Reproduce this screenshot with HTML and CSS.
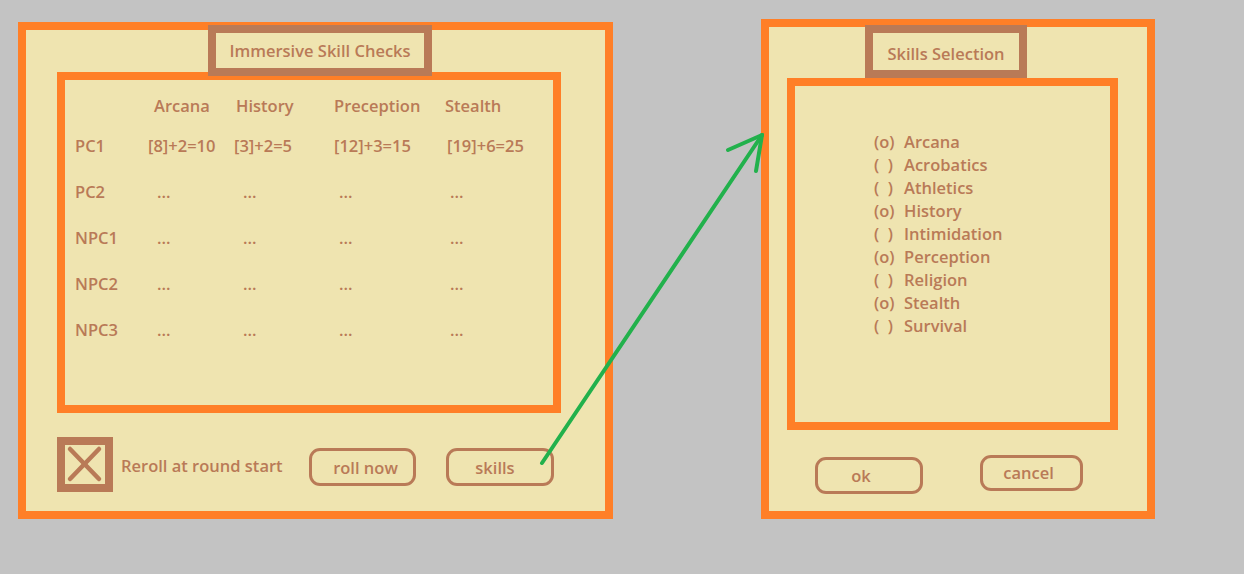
FILE: index.html
```html
<!DOCTYPE html>
<html lang="en">
<head>
<meta charset="utf-8">
<title>Immersive Skill Checks</title>
<link rel="stylesheet" href="styles.css">
</head>
<body>
<div class="stage">
  <section class="panel panel-main">
    <div class="title title-main">Immersive Skill Checks</div>
    <div class="box box-table">
      <div class="grid">
        <div class="cell"></div>
        <div class="cell h1">Arcana</div>
        <div class="cell h2">History</div>
        <div class="cell h3">Preception</div>
        <div class="cell h4">Stealth</div>

        <div class="cell lbl">PC1</div>
        <div class="cell v1">[8]+2=10</div>
        <div class="cell v2">[3]+2=5</div>
        <div class="cell v3">[12]+3=15</div>
        <div class="cell v4">[19]+6=25</div>

        <div class="cell lbl">PC2</div>
        <div class="cell d1">...</div>
        <div class="cell d2">...</div>
        <div class="cell d3">...</div>
        <div class="cell d4">...</div>

        <div class="cell lbl">NPC1</div>
        <div class="cell d1">...</div>
        <div class="cell d2">...</div>
        <div class="cell d3">...</div>
        <div class="cell d4">...</div>

        <div class="cell lbl">NPC2</div>
        <div class="cell d1">...</div>
        <div class="cell d2">...</div>
        <div class="cell d3">...</div>
        <div class="cell d4">...</div>

        <div class="cell lbl">NPC3</div>
        <div class="cell d1">...</div>
        <div class="cell d2">...</div>
        <div class="cell d3">...</div>
        <div class="cell d4">...</div>
      </div>
    </div>
    <div class="controls">
      <div class="check">
        <svg class="check-x" width="40" height="39" viewBox="0 0 40 39" aria-hidden="true">
          <line x1="5" y1="4" x2="34" y2="34" />
          <line x1="34" y1="4" x2="5" y2="34" />
        </svg>
      </div>
      <span class="check-label">Reroll at round start</span>
      <button class="btn btn-roll">roll now</button>
      <button class="btn btn-skills">skills</button>
    </div>
  </section>

  <section class="panel panel-skills">
    <div class="title title-skills">Skills Selection</div>
    <div class="box box-list">
      <ul class="skill-list">
        <li><span class="mark">(o)</span><span>Arcana</span></li>
        <li><span class="mark">(&nbsp;&nbsp;)</span><span>Acrobatics</span></li>
        <li><span class="mark">(&nbsp;&nbsp;)</span><span>Athletics</span></li>
        <li><span class="mark">(o)</span><span>History</span></li>
        <li><span class="mark">(&nbsp;&nbsp;)</span><span>Intimidation</span></li>
        <li><span class="mark">(o)</span><span>Perception</span></li>
        <li><span class="mark">(&nbsp;&nbsp;)</span><span>Religion</span></li>
        <li><span class="mark">(o)</span><span>Stealth</span></li>
        <li><span class="mark">(&nbsp;&nbsp;)</span><span>Survival</span></li>
      </ul>
    </div>
    <div class="dialog-buttons">
      <button class="btn btn-ok">ok</button>
      <button class="btn btn-cancel">cancel</button>
    </div>
  </section>
</div>

<svg class="arrow" width="1244" height="574" viewBox="0 0 1244 574" aria-hidden="true">
  <line x1="542" y1="463" x2="762" y2="135" />
  <line x1="762" y1="135" x2="728" y2="150" />
  <line x1="762" y1="135" x2="756" y2="171" />
</svg>
</body>
</html>
```

FILE: styles.css
```css
* {
  box-sizing: border-box;
}

html, body {
  margin: 0;
  padding: 0;
}

body {
  width: 1244px;
  height: 574px;
  background: #c3c3c3;
  font-family: "Open Sans", "DejaVu Sans", sans-serif;
  font-weight: 600;
  font-size: 16.5px;
  color: #b97a57;
  position: relative;
  overflow: hidden;
}

.stage {
  display: flex;
  align-items: flex-start;
  padding-left: 18px;
  gap: 148px;
}

.panel {
  background: #efe4b0;
  border: 8px solid #ff7f27;
  display: flex;
  flex-direction: column;
  align-items: flex-start;
}

.panel-main {
  width: 595px;
  height: 497px;
  margin-top: 22px;
}

.panel-skills {
  width: 394px;
  height: 500px;
  margin-top: 19px;
}

.title {
  border: 8px solid #b97a57;
  background: #efe4b0;
  display: flex;
  align-items: center;
  justify-content: center;
  position: relative;
  z-index: 1;
  white-space: nowrap;
}

.title-main {
  width: 224px;
  height: 51px;
  margin-top: -5px;
  margin-left: 182px;
}

.title-skills {
  width: 162px;
  height: 53px;
  margin-top: -2px;
  margin-left: 96px;
  padding-top: 4px;
}

.box {
  border: 8px solid #ff7f27;
  background: #efe4b0;
}

.box-table {
  width: 504px;
  height: 341px;
  margin-top: -4px;
  margin-left: 31px;
  padding: 8px 0 0 10px;
}

.grid {
  display: grid;
  grid-template-columns: 73px 86px 100px 112px 1fr;
  grid-template-rows: 34px repeat(5, 46px);
  align-items: center;
  white-space: nowrap;
}

.h1 { padding-left: 6px; }
.h2 { padding-left: 2px; }
.h3 { padding-left: 0; }
.h4 { padding-left: 0; margin-left: -1px; }
.v4 { padding-left: 1px; }
.lbl { padding-left: 0; }
.d1 { padding-left: 9px; }
.d2 { padding-left: 9px; }
.d3 { padding-left: 5px; }
.d4 { padding-left: 4px; }

.controls {
  display: flex;
  align-items: center;
  margin-top: 24px;
  margin-left: 31px;
}

.check {
  width: 56px;
  height: 55px;
  border: 8px solid #b97a57;
  background: #efe4b0;
  display: flex;
}

.check-x line {
  stroke: #b97a57;
  stroke-width: 4.5;
  stroke-linecap: round;
}

.check-label {
  width: 196px;
  padding-left: 8px;
  padding-top: 2px;
}

.btn {
  font: inherit;
  color: inherit;
  background: transparent;
  border: 3px solid #b97a57;
  border-radius: 11px;
  padding: 0;
  display: flex;
  align-items: center;
  justify-content: center;
}

.btn-roll {
  width: 107px;
  height: 38px;
  margin-top: 5px;
  padding-left: 6px;
}

.btn-skills {
  width: 108px;
  height: 38px;
  margin-top: 5px;
  margin-left: 30px;
  padding-right: 10px;
}

.box-list {
  width: 331px;
  height: 352px;
  margin-left: 18px;
  padding: 44px 0 0 79px;
}

.skill-list {
  list-style: none;
  margin: 0;
  padding: 0;
}

.skill-list li {
  display: flex;
  height: 23px;
  line-height: 23px;
  white-space: nowrap;
}

.mark {
  width: 30px;
  white-space: pre;
}

.dialog-buttons {
  display: flex;
  align-items: flex-start;
  margin-left: 46px;
}

.btn-ok {
  width: 108px;
  height: 37px;
  margin-top: 27px;
  padding-right: 16px;
}

.btn-cancel {
  width: 103px;
  height: 36px;
  margin-top: 25px;
  margin-left: 57px;
  padding-right: 6px;
  padding-bottom: 2px;
}

.arrow {
  position: absolute;
  top: 0;
  left: 0;
  pointer-events: none;
}

.arrow line {
  stroke: #22b14c;
  stroke-width: 4;
  stroke-linecap: round;
}
```
